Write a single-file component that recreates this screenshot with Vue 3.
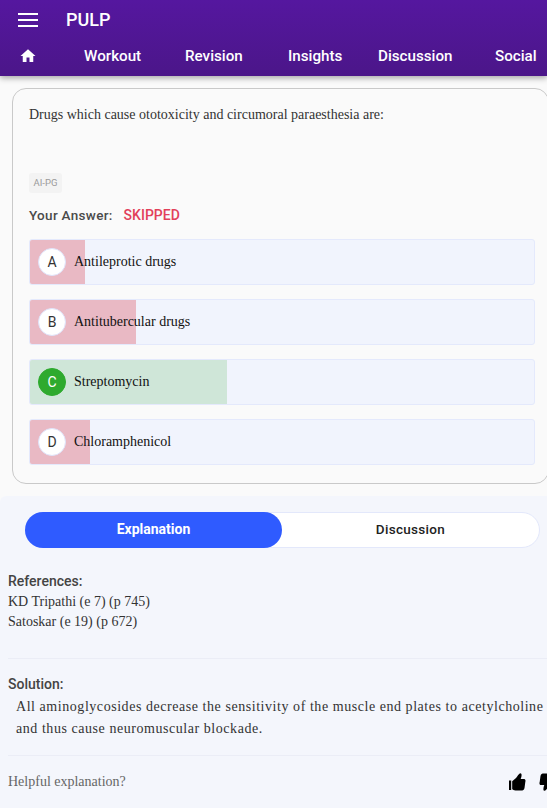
<script setup>
const tabs = ['Workout', 'Revision', 'Insights', 'Discussion', 'Social']
const options = [
  { key: 'A', text: 'Antileprotic drugs', pct: 11, tone: 'wrong' },
  { key: 'B', text: 'Antitubercular drugs', pct: 21, tone: 'wrong' },
  { key: 'C', text: 'Streptomycin', pct: 39, tone: 'right' },
  { key: 'D', text: 'Chloramphenicol', pct: 12, tone: 'wrong' }
]
</script>

<template>
  <div class="page">
    <header class="appbar">
      <div class="toprow">
        <svg class="menu" width="20" height="14" viewBox="0 0 20 14"><path d="M0 1h20M0 7h20M0 13h20" stroke="#fff" stroke-width="2" fill="none" /></svg>
        <span class="brand">PULP</span>
      </div>
      <nav class="navrow">
        <svg class="home" width="18" height="18" viewBox="0 0 24 24"><path d="M10 20v-6h4v6h5v-8h3L12 3 2 12h3v8z" fill="#fff" /></svg>
        <span v-for="t in tabs" :key="t" class="navitem">{{ t }}</span>
      </nav>
    </header>

    <section class="card">
      <p class="question">Drugs which cause ototoxicity and circumoral paraesthesia are:</p>
      <span class="tag">AI-PG</span>
      <div class="answer"><span class="label">Your Answer:</span><span class="skipped">SKIPPED</span></div>
      <div class="options">
        <div v-for="o in options" :key="o.key" class="option">
          <div class="fill" :class="o.tone" :style="{ width: o.pct + '%' }"></div>
          <span class="letter" :class="o.tone">{{ o.key }}</span>
          <span class="opttext">{{ o.text }}</span>
        </div>
      </div>
    </section>

    <section class="panel">
      <div class="switch">
        <div class="seg active">Explanation</div>
        <div class="seg">Discussion</div>
      </div>
      <h4 class="head refs">References:</h4>
      <div class="line">KD Tripathi (e 7) (p 745)</div>
      <div class="line">Satoskar (e 19) (p 672)</div>
      <hr class="rule first" />
      <h4 class="head">Solution:</h4>
      <p class="solution">All aminoglycosides decrease the sensitivity of the muscle end plates to acetylcholine and thus cause neuromuscular blockade.</p>
      <hr class="rule second" />
      <div class="helpful">
        <span>Helpful explanation?</span>
        <div class="thumbs">
          <svg width="18" height="18" viewBox="0 0 18 18"><path d="M1 7.500h2.200V17H1zM4.200 8.200 8 5C9.200 3.500 11 .3 12.500.2c1.700.3 1.200 3.300.2 5.800H16c1.600 0 1.800 2 1.300 3l-.8 6c-.4 2-1.500 2.500-3.500 2.500H7.500c-1.800 0-2.500-1-3.300-1.200z" fill="#000" /></svg>
          <svg width="18" height="18" viewBox="0 0 18 18"><g transform="rotate(180 9 9)"><path d="M1 7.500h2.200V17H1zM4.200 8.200 8 5C9.200 3.500 11 .3 12.500.2c1.700.3 1.200 3.300.2 5.800H16c1.600 0 1.800 2 1.300 3l-.8 6c-.4 2-1.500 2.500-3.500 2.500H7.500c-1.800 0-2.500-1-3.300-1.200z" fill="#000" /></g></svg>
        </div>
      </div>
    </section>
  </div>
</template>

<style>
html, body { margin: 0; background: #fafafa; overflow: hidden; }
</style>

<style scoped>
.page { width: 547px; height: 808px; overflow: hidden; background: #fafafa; font-family: Roboto, sans-serif; }
.appbar { height: 76px; background: linear-gradient(180deg, #55179f, #4b1689); box-shadow: 0 2px 6px rgba(0,0,0,.35); color: #fff; position: relative; }
.toprow { height: 40px; display: flex; align-items: center; padding-left: 18px; }
.brand { margin-left: 28px; font-size: 18px; font-weight: 500; line-height: 40px; }
.menu { display: block; }
.navrow { height: 32px; display: flex; align-items: center; padding-left: 19px; white-space: nowrap; }
.home { flex: none; margin-right: 47px; }
.navitem { font-size: 15.200px; font-weight: 500; }
.navitem:nth-of-type(1) { width: 101px; }
.navitem:nth-of-type(2) { width: 103px; }
.navitem:nth-of-type(3) { width: 90px; }
.navitem:nth-of-type(4) { width: 117px; }
.card { box-sizing: border-box; width: 537px; height: 396px; margin: 12px 0 0 12px; padding: 17px 12px 0 16px; border: 1px solid #c9c9c9; border-radius: 14px; background: #fafafa; }
.question { margin: 0; font: 14px/17px "Liberation Serif", serif; color: #333; }
.tag { display: block; width: 33px; height: 20px; margin-top: 50px; background: #f3f3f3; border-radius: 3px; font: 9.500px/20px Roboto, sans-serif; color: #9a9a9a; text-align: center; }
.answer { display: flex; align-items: center; height: 16px; margin-top: 14px; font-size: 13.500px; line-height: 16px; letter-spacing: .3px; font-weight: 500; }
.label { color: #4a4a4a; }
.skipped { color: #e2405a; margin-left: 11px; font-size: 14px; letter-spacing: 0; }
.options { display: flex; flex-direction: column; gap: 14px; margin-top: 16px; }
.option { position: relative; box-sizing: border-box; height: 46px; width: 506px; display: flex; align-items: center; background: #f1f4fd; border: 1px solid #e4e9fc; border-radius: 3px; overflow: hidden; }
.fill { position: absolute; left: 0; top: 0; bottom: 0; }
.fill.wrong { background: #e9b9c4; }
.fill.right { background: #cfe6d8; }
.letter { position: relative; box-sizing: border-box; width: 28px; height: 28px; margin-left: 8px; border-radius: 50%; display: flex; align-items: center; justify-content: center; background: #fff; border: 1px solid #dfe3fa; font: 14px "Roboto", sans-serif; color: #333; }
.letter.right { background: #2eaa2e; border-color: #2eaa2e; color: #fff; }
.opttext { position: relative; top: -1px; margin-left: 8px; font: 14px/17px "Liberation Serif", serif; color: #111; }
.panel { box-sizing: border-box; height: 312px; margin-top: 12px; padding: 16px 0 0 8px; background: #f4f6fc; border-radius: 6px 0 0 0; }
.switch { display: flex; box-sizing: border-box; width: 515px; height: 36px; margin-left: 17px; background: #fff; border: 1px solid #e3e8fb; border-radius: 18px; }
.seg { flex: 1 1 0; display: flex; align-items: center; justify-content: center; padding: 0 0 2px 1px; box-sizing: border-box; font-size: 13.500px; font-weight: 500; color: #222; letter-spacing: .3px; margin: -1px; }
.seg.active { flex: none; width: 257px; padding-left: 0; background: #2f5bff; color: #fff; border-radius: 18px; font-size: 14px; font-weight: 700; letter-spacing: 0; }
.head { margin: 0; font-size: 14px; line-height: 16px; font-weight: 500; color: #444; }
.refs { margin-top: 25px; margin-bottom: 3px; }
.line { font: 14px/20px "Liberation Serif", serif; color: #333; }
.rule { height: 1px; margin: 0; border: 0; background: #ebedf6; }
.first { margin: 26px 0 17px; }
.solution { margin: 4px 0 0 8px; font: 14px/22px "Liberation Serif", serif; color: #333; letter-spacing: .55px; width: 531px; }
.second { margin: 15px 0 17px; }
.helpful { display: flex; justify-content: space-between; align-items: center; height: 18px; font: 14px "Liberation Serif", serif; color: #666; position: relative; }
.thumbs { position: absolute; left: 500px; top: 0; display: flex; gap: 13px; }
</style>
